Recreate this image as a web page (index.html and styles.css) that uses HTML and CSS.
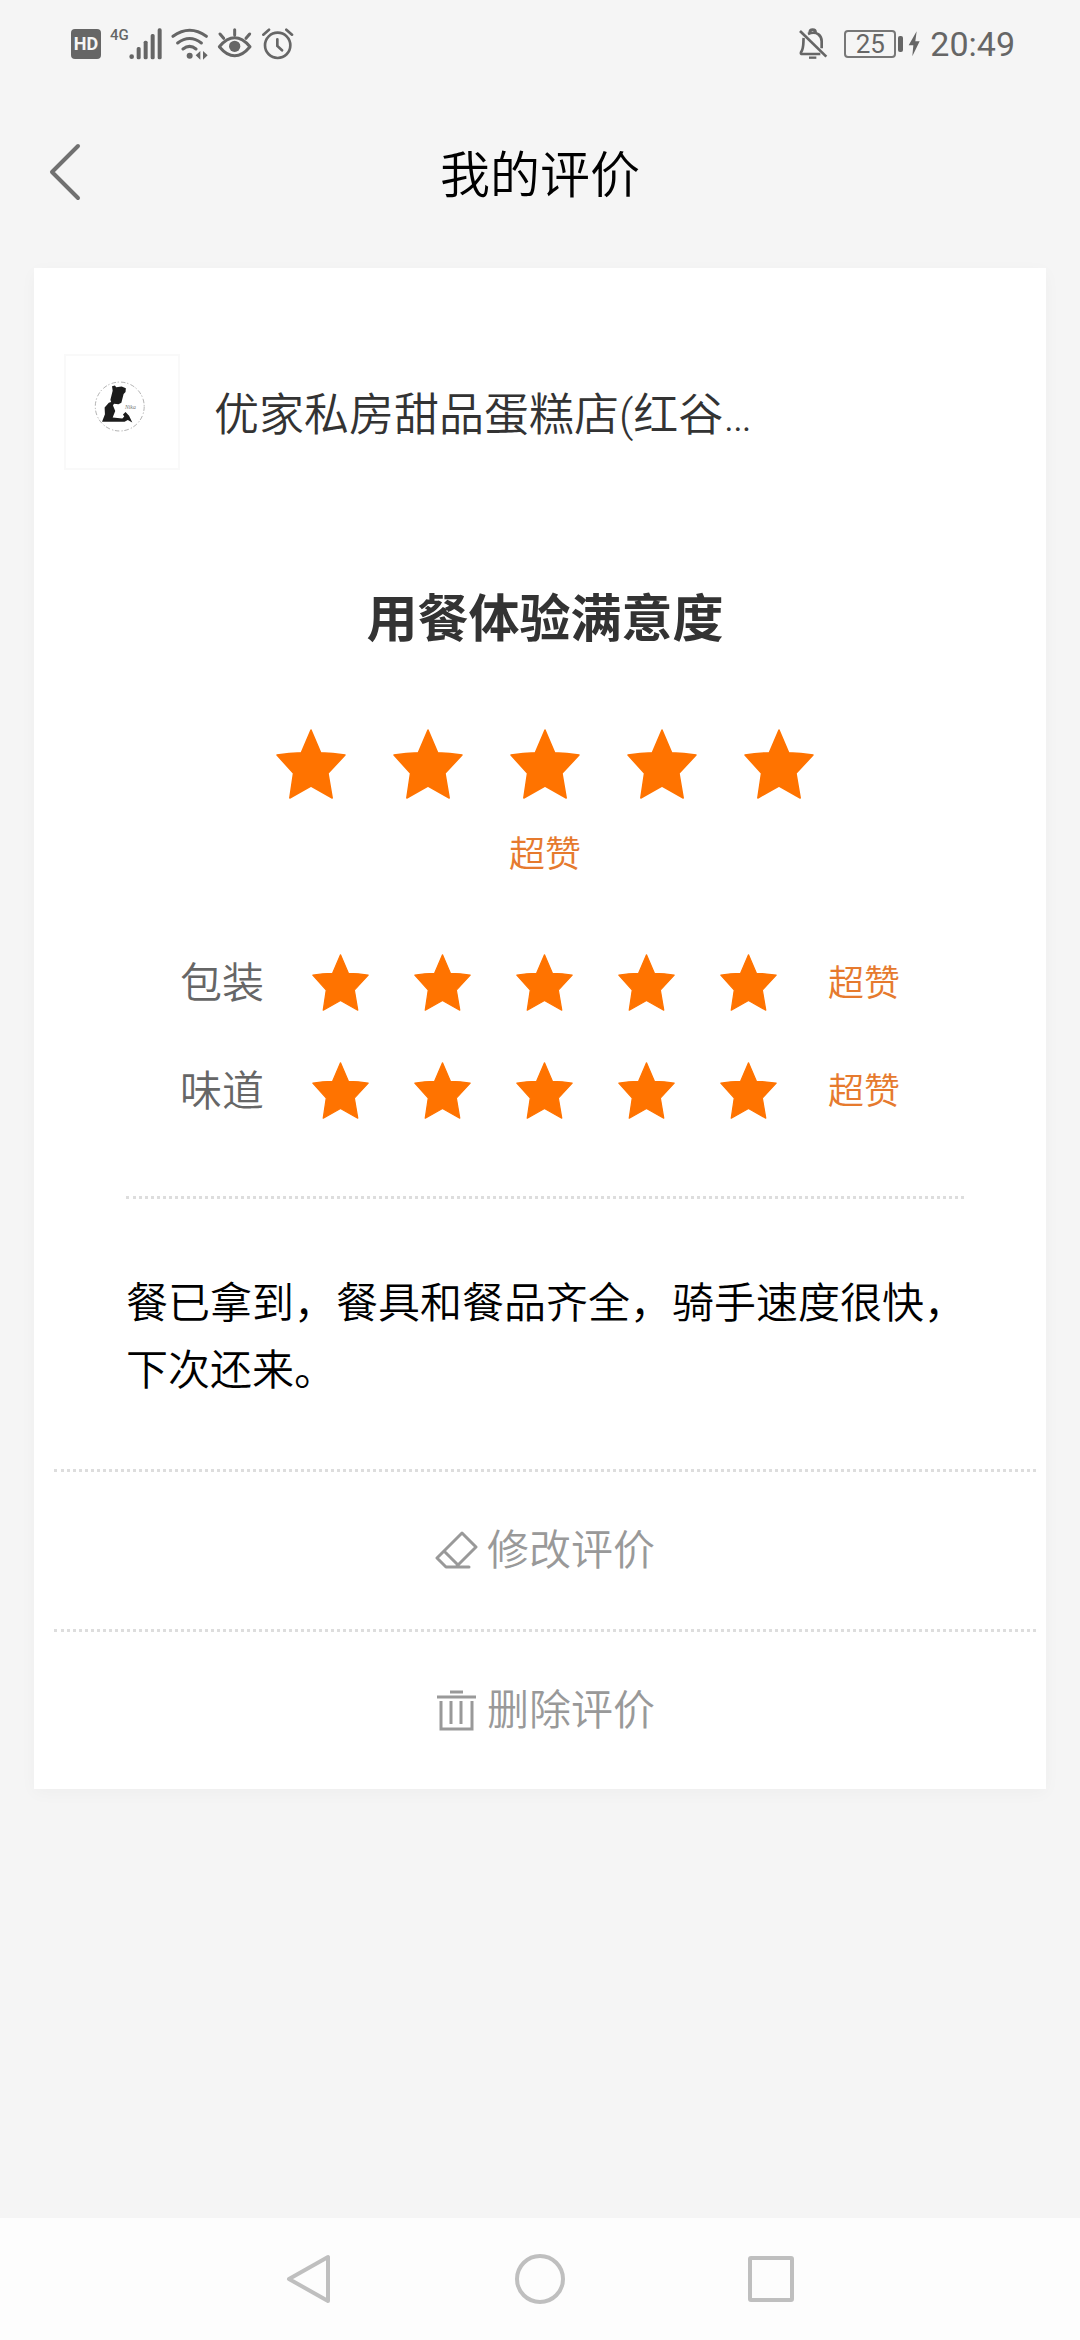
FILE: index.html
```html
<!DOCTYPE html>
<html lang="zh-CN">
<head>
<meta charset="utf-8">
<meta name="viewport" content="width=device-width, initial-scale=1">
<title>我的评价</title>
<link rel="stylesheet" href="styles.css">
</head>
<body>
<svg class="defs" aria-hidden="true">
  <symbol id="star" viewBox="0 0 70 70"><path d="M35 1 44.7 23.7Q57 24 69 26L52 44.3 56.200 69 35 57 13.800 69 17.500 44.300 1 26Q13 24 25.300 23.700Z" fill="#ff7300" stroke="#ff7300" stroke-width="1.500" stroke-linejoin="round"/></symbol>
</svg>

<div class="status">
  <div class="status-group status-left">
    <span class="hd">HD</span>
    <span class="signal">
      <span class="net">4G</span>
      <svg width="33" height="32" viewBox="235 54 99 96" fill="#666"><circle cx="243" cy="140" r="7"/><rect x="258" y="111" width="12" height="37" rx="5"/><rect x="279" y="92" width="12" height="56" rx="5"/><rect x="300" y="72" width="12" height="76" rx="5"/><rect x="321" y="55" width="12" height="93" rx="5"/></svg>
    </span>
    <svg width="37" height="32" viewBox="360 54 111 96" fill="none" stroke="#666" stroke-width="9" stroke-linecap="round"><path d="M366 79Q416 43 466 79M380 99Q416 72 451 99M396 117Q416 101 435 117"/><circle cx="416" cy="137" r="9" fill="#666" stroke="none"/><path d="M448 123V149L434 136ZM456 123V149L470 136Z" fill="#666" stroke="none"/></svg>
    <svg width="36" height="32" viewBox="497 57 108 96" fill="none" stroke="#666" stroke-width="9" stroke-linecap="round" stroke-linejoin="round"><path d="M504 113Q550 60 596 113Q550 168 504 113ZM506 75 517 88M550 62V78M595 75 584 88"/><circle cx="550" cy="112" r="17" fill="#666" stroke="none"/></svg>
    <svg width="32" height="32" viewBox="634 54 96 96" fill="none" stroke="#666" stroke-width="8" stroke-linecap="round"><circle cx="681" cy="106" r="38"/><path d="M638 74 655 59M707 59 724 74M680 88V108L694 121"/></svg>
  </div>
  <div class="status-group status-right">
    <svg width="30" height="32" viewBox="57 54 90 96" fill="none" stroke="#666" stroke-width="8"><path d="M63 63 142 140" /><path d="M87 72C116 60 128 80 128 94V115M74 84C72 94 76 112 66 127Q64 132 70 132H124M92 68Q92 59 101 59T110 68"/><path d="M90 143H112" stroke-width="7"/></svg>
    <span class="battery">25</span>
    <svg width="12" height="26" viewBox="386 65 36 78" fill="#666"><path d="M412 66 388 108H402L399 141 421 96H408Z"/></svg>
    <time class="clock">20:49</time>
  </div>
</div>

<header class="header">
  <button class="back" aria-label="返回"><svg width="36" height="60" viewBox="0 0 36 60" fill="none" stroke="#707070" stroke-width="4" stroke-linecap="round" stroke-linejoin="round"><path d="M31 4 5 30 31 56"/></svg></button>
  <h1 class="title">我的评价</h1>
</header>

<main class="card">
  <section class="shop">
    <svg class="avatar" viewBox="12 12 348 348" role="img" aria-label="店铺头像"><circle cx="179" cy="169" r="76" fill="none" stroke="#888" stroke-width="2" stroke-dasharray="14 5 4 7"/><path d="M155 106 164 104 168 109 185 107 198 112 197 124 191 130 184 157 175 162 161 160 158 166 165 183 157 203 187 206 193 200 189 194 197 186 208 198 218 219 204 211 194 216 124 216 133 193 132 172 145 157 152 155 150 148 157 120Z" fill="#1c1c1c"/><text x="195" y="178" class="avatar-text">Nika</text></svg>
    <h2 class="shop-name">优家私房甜品蛋糕店(红谷…</h2>
  </section>

  <section class="overall">
    <h2 class="overall-title">用餐体验满意度</h2>
    <div class="stars stars-large" role="img" aria-label="5星">
      <svg><use href="#star"/></svg><svg><use href="#star"/></svg><svg><use href="#star"/></svg><svg><use href="#star"/></svg><svg><use href="#star"/></svg>
    </div>
    <span class="grade">超赞</span>
  </section>

  <section class="details">
    <div class="detail">
      <span class="detail-label">包装</span>
      <div class="stars" role="img" aria-label="5星">
        <svg><use href="#star"/></svg><svg><use href="#star"/></svg><svg><use href="#star"/></svg><svg><use href="#star"/></svg><svg><use href="#star"/></svg>
      </div>
      <span class="grade">超赞</span>
    </div>
    <div class="detail">
      <span class="detail-label">味道</span>
      <div class="stars" role="img" aria-label="5星">
        <svg><use href="#star"/></svg><svg><use href="#star"/></svg><svg><use href="#star"/></svg><svg><use href="#star"/></svg><svg><use href="#star"/></svg>
      </div>
      <span class="grade">超赞</span>
    </div>
  </section>

  <p class="review">餐已拿到，餐具和餐品齐全，骑手速度很快，下次还来。</p>

  <button class="action">
    <svg width="44" height="44" viewBox="0 0 44 44" fill="none" stroke="#999" stroke-width="3" stroke-linejoin="round" stroke-linecap="round"><path d="M27 4 41 18 23 36 9 22ZM9 22 2 29 11 38H34M23 36 21 38"/></svg>
    <span>修改评价</span>
  </button>
  <button class="action">
    <svg width="44" height="44" viewBox="0 0 44 44" fill="none" stroke="#999" stroke-width="3"><path d="M15 3H28M2 8H41M6 12V40H37V12M16 12V35M26 12V35"/></svg>
    <span>删除评价</span>
  </button>
</main>

<nav class="nav">
  <button aria-label="返回"><svg width="52" height="52" viewBox="0 0 52 52"><path d="M45 4V48L6 26Z"/></svg></button>
  <button aria-label="主屏幕"><svg width="52" height="52" viewBox="0 0 52 52"><circle cx="26" cy="26" r="23"/></svg></button>
  <button aria-label="最近任务"><svg width="52" height="52" viewBox="0 0 52 52"><rect x="5" y="5" width="42" height="42" rx="1"/></svg></button>
</nav>
</body>
</html>
```
FILE: styles.css
```css
* {
  box-sizing: border-box;
}

body {
  margin: 0;
  min-height: 100vh;
  display: flex;
  flex-direction: column;
  background: #f5f5f5;
  color: #333;
  font-family: Roboto, "Noto Sans CJK SC", sans-serif;
  font-weight: 350;
}

svg {
  display: block;
  flex: none;
}

button {
  padding: 0;
  border: 0;
  background: none;
  color: inherit;
  font: inherit;
}

h1, h2, p {
  margin: 0;
  font-weight: inherit;
}

.defs {
  position: absolute;
  width: 0;
  height: 0;
}

/* status bar */
.status {
  height: 88px;
  padding: 0 65px 0 71px;
  display: flex;
  align-items: center;
  justify-content: space-between;
  color: #666;
}

.status-group {
  display: flex;
  align-items: center;
}

.status-left {
  gap: 9px;
}

.status-right {
  gap: 8px;
}

.hd {
  width: 30px;
  height: 30px;
  border-radius: 4px;
  background: #666;
  color: #f5f5f5;
  font-size: 18px;
  font-weight: 700;
  line-height: 30px;
  text-align: center;
}

.signal {
  display: flex;
}

.net {
  font-size: 15px;
  font-weight: 500;
  line-height: 15px;
}

.battery {
  width: 52px;
  height: 28px;
  margin: 0 4px 0 8px;
  border: 2px solid #777;
  border-radius: 4px;
  font-size: 26px;
  font-weight: 400;
  line-height: 25px;
  text-align: center;
  position: relative;
}

.battery::after {
  content: "";
  position: absolute;
  top: 4px;
  right: -9px;
  width: 5px;
  height: 16px;
  border-radius: 2px;
  background: #666;
}

.clock {
  margin-left: 2px;
  font-size: 34px;
  font-weight: 400;
  line-height: 40px;
}

/* page header */
.header {
  height: 180px;
  padding: 0 47px 12px;
  display: grid;
  grid-template-columns: 1fr auto 1fr;
  align-items: center;
}

.back {
  justify-self: start;
}

.title {
  padding-top: 8px;
  color: #000;
  font-size: 50px;
  line-height: 72px;
}

/* review card */
.card {
  margin: 0 34px;
  padding: 0 10px 0 20px;
  background: #fff;
  box-shadow: 0 4px 16px rgba(0, 0, 0, 0.03);
}

.shop {
  padding: 86px 10px 0;
  display: flex;
  align-items: center;
  gap: 34px;
}

.avatar {
  width: 116px;
  height: 116px;
  border: 2px solid #f9f9f9;
}

.avatar-text {
  fill: #777;
  font: italic 18px "Liberation Serif", serif;
}

.shop-name {
  padding-top: 8px;
  font-size: 45px;
  line-height: 64px;
}

.overall {
  padding-top: 114px;
  display: flex;
  flex-direction: column;
  align-items: center;
}

.overall-title {
  margin-bottom: 73px;
  font-size: 51px;
  font-weight: 700;
  line-height: 72px;
}

.stars {
  display: flex;
  gap: 45px;
}

.stars svg {
  width: 57px;
  height: 57px;
}

.stars-large {
  margin-bottom: 30px;
  gap: 47px;
}

.stars-large svg {
  width: 70px;
  height: 70px;
}

.grade {
  color: #e67a2e;
  font-size: 36px;
  line-height: 52px;
}

.details {
  margin: 0 72px;
  padding: 71px 54px 72px;
  border-bottom: 3px dotted #ddd;
  display: flex;
  flex-direction: column;
  gap: 44px;
}

.detail {
  height: 64px;
  display: flex;
  align-items: center;
}

.detail-label {
  margin-right: 48px;
  color: #666;
  font-size: 42px;
  line-height: 64px;
}

.detail .stars {
  margin-right: 51px;
  padding-bottom: 4px;
}

.review {
  padding: 71px 68px 65px 72px;
  color: #000;
  font-size: 42px;
  line-height: 67px;
}

.action {
  width: 100%;
  height: 160px;
  border-top: 3px dotted #ddd;
  display: flex;
  align-items: center;
  justify-content: center;
  gap: 8px;
  color: #999;
  font-size: 42px;
  line-height: 64px;
}

/* system navigation */
.nav {
  height: 122px;
  margin-top: auto;
  padding: 0 194px;
  display: flex;
  align-items: center;
  background: #fdfdfd;
}

.nav button {
  flex: 1;
  display: flex;
  justify-content: center;
}

.nav svg {
  fill: none;
  stroke: #bfbfbf;
  stroke-width: 4px;
  stroke-linejoin: round;
}
```
